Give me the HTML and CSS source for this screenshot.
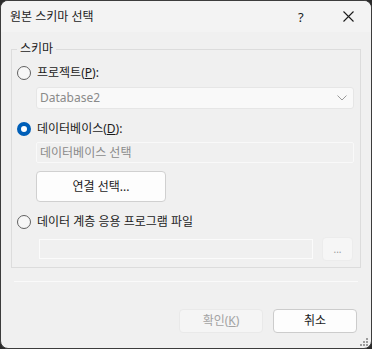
FILE: index.html
```html
<!DOCTYPE html>
<html lang="ko">
<head>
  <meta charset="UTF-8" />
  <title>원본 스키마 선택</title>
  <link rel="stylesheet" href="styles.css">
</head>
<body>
  <div class="dialog">
    <div class="titlebar">
      <span class="title">원본 스키마 선택</span>
      <span class="help">?</span>
      <span class="close">
        <svg width="11" height="11" viewBox="0 0 11 11"><path d="M0.5 0.5 L10.5 10.5 M10.5 0.5 L0.5 10.5" stroke="#1b1b1b" stroke-width="1.1" fill="none"/></svg>
      </span>
    </div>

    <div class="content">
      <fieldset class="group">
        <legend>스키마</legend>

        <label class="option first"><span class="radio"></span>프로젝트(<u>P</u>):</label>
        <div class="combo">
          <span>Database2</span>
          <svg width="10" height="6" viewBox="0 0 10 6"><path d="M0.5 0.5 L5 5 L9.5 0.5" stroke="#9a9a9a" stroke-width="1" fill="none"/></svg>
        </div>

        <label class="option"><span class="radio checked"></span>데이터베이스(<u>D</u>):</label>
        <div class="field">데이터베이스 선택</div>
        <button class="btn connect">연결 선택...</button>

        <label class="option"><span class="radio"></span>데이터 계층 응용 프로그램 파일</label>
        <div class="file-row">
          <div class="file-input"></div>
          <button class="btn browse">...</button>
        </div>
      </fieldset>

      <div class="sep"></div>

      <div class="actions">
        <button class="btn ok" disabled>확인(<u>K</u>)</button>
        <button class="btn cancel">취소</button>
      </div>
    </div>

    <svg class="grip" width="9" height="9" viewBox="0 0 9 9">
      <rect x="6" y="0" width="2" height="2" fill="#9c9c9c"/>
      <rect x="3" y="3" width="2" height="2" fill="#9c9c9c"/>
      <rect x="6" y="3" width="2" height="2" fill="#9c9c9c"/>
      <rect x="0" y="6" width="2" height="2" fill="#9c9c9c"/>
      <rect x="3" y="6" width="2" height="2" fill="#9c9c9c"/>
      <rect x="6" y="6" width="2" height="2" fill="#9c9c9c"/>
    </svg>
  </div>
</body>
</html>
```

FILE: styles.css
```css
* {
  margin: 0;
  padding: 0;
  box-sizing: border-box;
  font-family: "Noto Sans", "Noto Sans CJK KR", sans-serif;
}

html, body {
  width: 372px;
  height: 349px;
  background: #2b2b2b;
}

.dialog {
  position: relative;
  width: 372px;
  height: 349px;
  background: #f0f0f0;
  border: 1px solid #3c3c3c;
  border-radius: 8px;
  overflow: hidden;
  color: #1b1b1b;
  font-size: 12px;
}

.titlebar {
  height: 31px;
  background: #f3f3f3;
  display: flex;
  align-items: center;
  padding-left: 9px;
}

.title {
  flex: 1;
  font-size: 12px;
  line-height: 16px;
}

.help {
  font-size: 13px;
  line-height: 16px;
  width: 46px;
  padding-left: 1px;
}

.close {
  width: 22px;
  height: 11px;
  display: flex;
  margin-right: 6px;
}

.content {
  padding-top: 9px;
}

.group {
  width: 350px;
  margin-left: 10px;
  border: 1px solid #dcdcdc;
  padding: 0 6px 6px 5px;
}

.group legend {
  padding: 0 3px;
  font-size: 12px;
  line-height: 16px;
}

.option {
  display: flex;
  align-items: center;
  height: 16px;
  line-height: 16px;
  margin-top: 12px;
}

.option.first {
  margin-top: 8px;
}

.radio {
  width: 14px;
  height: 14px;
  border-radius: 50%;
  border: 1px solid #616161;
  background: #f7f7f7;
  margin-right: 6px;
}

.radio.checked {
  border: 4px solid #005fb8;
  background: #ffffff;
}

.combo {
  margin: 6px 0 0 19px;
  height: 22px;
  background: #f9f9f9;
  border: 1px solid #e6e6e6;
  border-radius: 3px;
  display: flex;
  align-items: center;
  justify-content: space-between;
  padding: 0 6px 0 3px;
  color: #8a8a8a;
  line-height: 16px;
}

.field {
  margin: 5px 0 0 19px;
  height: 21px;
  border: 1px solid #f9f9f9;
  border-radius: 2px;
  padding-left: 3px;
  color: #8a8a8a;
  line-height: 19px;
}

.btn {
  display: block;
  font-size: 12px;
  line-height: 16px;
  color: #1b1b1b;
  background: #fdfdfd;
  border: 1px solid #d0d0d0;
  border-radius: 4px;
}

.connect {
  margin: 8px 0 0 19px;
  width: 130px;
  height: 31px;
}

.file-row {
  display: flex;
  align-items: center;
  gap: 9px;
  margin: 7px 0 0 22px;
  height: 24px;
}

.file-input {
  width: 274px;
  height: 20px;
  border: 1px solid #fbfbfb;
}

.browse {
  width: 31px;
  height: 24px;
  background: #f6f6f6;
  border-color: #ececec;
  color: #9a9a9a;
  font-size: 10px;
}

.sep {
  margin: 13px 13px 0 13px;
  height: 1px;
  background: #fafafa;
}

.actions {
  display: flex;
  justify-content: flex-end;
  gap: 10px;
  margin: 27px 14px 0 0;
}

.actions .btn {
  width: 84px;
  height: 24px;
}

.ok {
  background: #f5f5f5;
  border-color: #e9e9e9;
  color: #a3a3a3;
}

.cancel {
  border-color: #cccccc;
}

.grip {
  position: absolute;
  right: 2px;
  bottom: 1px;
}
```
